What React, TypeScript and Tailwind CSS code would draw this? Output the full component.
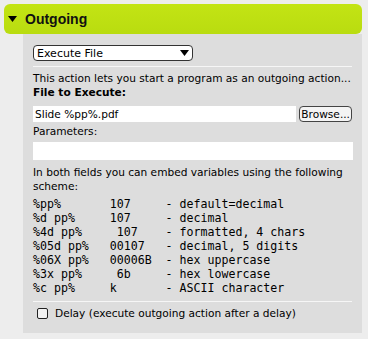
import React from 'react';

const rows: [string, string, string][] = [
  ['%pp%', '107', 'default=decimal'],
  ['%d pp%', '107', 'decimal'],
  ['%4d pp%', ' 107', 'formatted, 4 chars'],
  ['%05d pp%', '00107', 'decimal, 5 digits'],
  ['%06X pp%', '00006B', 'hex uppercase'],
  ['%3x pp%', ' 6b', 'hex lowercase'],
  ['%c pp%', 'k', 'ASCII character'],
];

const pad = (s: string, n: number) => s + ' '.repeat(Math.max(0, n - s.length));

const App: React.FC = () => {
  return (
    <div className="w-[368px] h-[339px] bg-[#ededed] pt-[4px] pl-[4px] font-['DejaVu_Sans',sans-serif] text-[10.6px] text-black">
      <div className="w-[358px]">
        <div className="h-[30px] rounded-[6px] bg-gradient-to-b from-[#c3e414] to-[#b9dc10] flex items-center pl-[4px]">
          <svg width="9" height="6" viewBox="0 0 9 6">
            <path d="M0 0 H9 L4.5 6 Z" fill="#000" />
          </svg>
          <span className="ml-[8px] font-['Liberation_Sans',sans-serif] text-[14px] font-bold text-[#111]">Outgoing</span>
        </div>
        <div className="ml-[19px] h-[299px] bg-[#dddddd] px-[10px] pt-[11px]">
          <div className="w-[160px] h-[16px] bg-white border border-[#333] rounded-[4px] flex items-center justify-between pl-[3px] pr-[3px] leading-none text-[11px]">
            <span>Execute File</span>
            <svg width="9" height="6" viewBox="0 0 9 6">
              <path d="M0 0 H9 L4.5 6 Z" fill="#000" />
            </svg>
          </div>
          <div className="h-px bg-[#f6f6f6] mt-[5px]" />
          <div className="mt-[5px] leading-[13px] whitespace-nowrap">This action lets you start a program as an outgoing action...</div>
          <div className="mt-[1px] leading-[13px] font-bold">File to Execute:</div>
          <div className="mt-[7px] flex items-center gap-[3px]">
            <div className="w-[265px] h-[16px] bg-white flex items-center pl-[2px] leading-none">Slide %pp%.pdf</div>
            <div className="w-[53px] h-[16px] rounded-[4px] border border-[#444] bg-[#f4f4f4] flex items-center justify-center leading-none">Browse...</div>
          </div>
          <div className="mt-[3px] leading-[13px]">Parameters:</div>
          <div className="mt-[4px] w-[320px] h-[18px] bg-white" />
          <div className="mt-[5px] leading-[14px]">In both fields you can embed variables using the following scheme:</div>
          <div className="mt-[4px] font-['DejaVu_Sans_Mono',monospace] text-[11.6px] leading-[14px] whitespace-pre">
            {rows.map(([a, b, c]) => (
              <div key={a}>{pad(a, 11) + pad(b, 8) + '- ' + c}</div>
            ))}
          </div>
          <div className="h-px bg-[#f6f6f6] mt-[6px]" />
          <div className="mt-[5px] flex items-center pl-[4px]">
            <div className="w-[11px] h-[11px] rounded-[2px] border border-[#222] bg-[#f2f2f2]" />
            <span className="ml-[7px] leading-[13px]">Delay (execute outgoing action after a delay)</span>
          </div>
        </div>
      </div>
    </div>
  );
};

export default App;
